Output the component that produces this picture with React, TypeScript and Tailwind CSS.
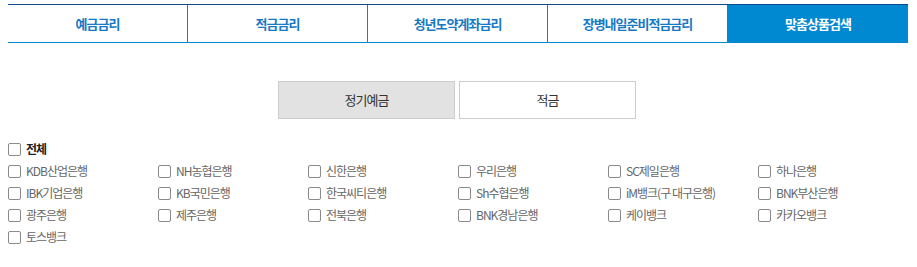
import { useState } from "react";

const tabs = ["예금금리", "적금금리", "청년도약계좌금리", "장병내일준비적금금리", "맞춤상품검색"];

const banks = [
    "KDB산업은행", "NH농협은행", "신한은행", "우리은행", "SC제일은행", "하나은행",
    "IBK기업은행", "KB국민은행", "한국씨티은행", "Sh수협은행", "iM뱅크(구 대구은행)", "BNK부산은행",
    "광주은행", "제주은행", "전북은행", "BNK경남은행", "케이뱅크", "카카오뱅크",
    "토스뱅크",
];

function Box({ checked }: { checked: boolean }) {
    return (
        <span className="w-[13px] h-[13px] shrink-0 rounded-[2px] border border-[#8a8a8a] bg-white flex items-center justify-center">
            {checked && (
                <svg width="9" height="9" viewBox="0 0 9 9">
                    <path d="M1.5 4.5l2 2 4-4.5" stroke="#333" strokeWidth="1.4" fill="none" />
                </svg>
            )}
        </span>
    );
}

export default function App() {
    const [activeTab, setActiveTab] = useState(4);
    const [kind, setKind] = useState(0);
    const [selected, setSelected] = useState<string[]>([]);

    const toggle = (name: string) =>
        setSelected(selected.includes(name) ? selected.filter(b => b !== name) : [...selected, name]);
    const allChecked = selected.length === banks.length;

    return (
        <div className="bg-white min-h-[267px] pt-1" style={{ fontFamily: "'Noto Sans CJK KR', 'Noto Sans', sans-serif" }}>
            <ul className="mx-2 w-[900px] flex border-t border-[#0b4a8f] border-b border-b-[#0088d1]">
                {tabs.map((t, i) => (
                    <li
                        key={t}
                        onClick={() => setActiveTab(i)}
                        className={`w-[180px] h-[37px] flex items-center justify-center cursor-pointer text-[13px] font-bold tracking-[-1px] ${
                            i < tabs.length - 1 ? "border-r border-[#0088d1]" : ""
                        } ${activeTab === i ? "bg-[#0088d1] text-white" : "text-[#1679c4]"}`}
                    >
                        {t}
                    </li>
                ))}
            </ul>

            <div className="flex justify-center gap-1 mt-[38px] pr-[3px]">
                {["정기예금", "적금"].map((k, i) => (
                    <button
                        key={k}
                        onClick={() => setKind(i)}
                        className={`w-[177px] h-[38px] border border-[#cccccc] text-[13px] tracking-[-1px] text-[#333] ${
                            kind === i ? "bg-[#e2e2e2]" : "bg-white"
                        }`}
                    >
                        {k}
                    </button>
                ))}
            </div>

            <div className="mx-2 mt-[19px]">
                <label
                    className="flex items-center gap-[5px] h-[22px] cursor-pointer"
                    onClick={() => setSelected(allChecked ? [] : [...banks])}
                >
                    <Box checked={allChecked} />
                    <span className="text-[12px] font-bold text-[#222] tracking-[-1px]">전체</span>
                </label>
                <div className="grid grid-cols-[repeat(6,150px)]">
                    {banks.map(b => (
                        <label key={b} className="flex items-center gap-[5px] h-[22px] cursor-pointer" onClick={() => toggle(b)}>
                            <Box checked={selected.includes(b)} />
                            <span className="text-[12px] text-[#666] tracking-[-1px] whitespace-nowrap">{b}</span>
                        </label>
                    ))}
                </div>
            </div>
        </div>
    );
}
